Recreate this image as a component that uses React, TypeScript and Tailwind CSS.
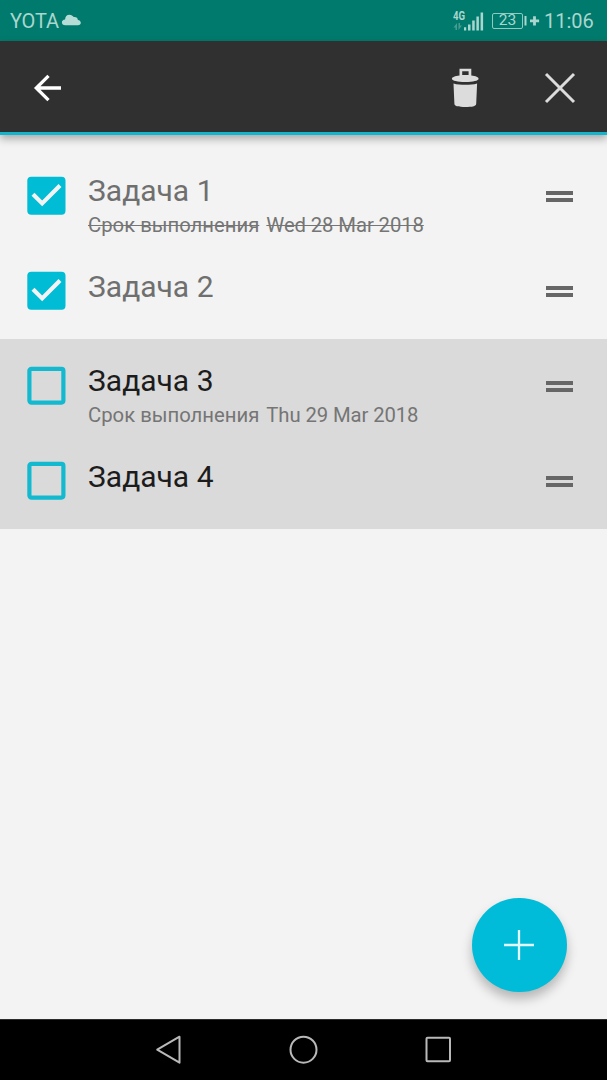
import { useState } from "react";

type Task = {
  id: number;
  title: string;
  due?: string;
  done: boolean;
  selected: boolean;
};

const initialTasks: Task[] = [
  { id: 1, title: "Задача 1", due: "Wed 28 Mar 2018", done: true, selected: false },
  { id: 2, title: "Задача 2", done: true, selected: false },
  { id: 3, title: "Задача 3", due: "Thu 29 Mar 2018", done: false, selected: true },
  { id: 4, title: "Задача 4", done: false, selected: true },
];

function StatusBar() {
  return (
    <div className="flex h-[41px] shrink-0 items-center bg-[#007a6c] pl-[10px] pr-[13px] text-[20px] leading-[41px] text-[#a9d6cf]">
      <span className="w-[51px] whitespace-nowrap pt-[2px] tracking-[-0.15px]">YOTA</span>
      <svg className="mt-[-1px] h-[12px] w-[20px]" viewBox="0 0 20 12" fill="#b5ddd6">
        <path d="M4.500 11.200C2 11.200.9 10 .9 8.400c0-1.600 1.200-2.800 3.200-2.900C4.200 2.700 5.800.7 8.400.7c2 0 3.500.9 4.300 2.400 2.600-.3 4 .9 4.200 2.800 1.900.2 2.900 1.500 2.900 2.900 0 1.500-1.100 2.400-2.900 2.400z" />
      </svg>
      <div className="ml-auto flex items-center">
        <div className="mr-[8px] flex h-[20px] w-[31px]">
          <div className="flex w-[11px] flex-col">
            <span className="h-[11px] origin-left scale-x-80 text-[12px] font-bold leading-[11px]">4G</span>
            <svg className="mt-px h-[7px] w-[10px]" viewBox="0 0 10 7" fill="#4a9c91">
              <path d="M4 0v7H2.500V4.500H.5zM5.500 0H7v2.500h2L5.500 7z" />
            </svg>
          </div>
          <svg className="h-[20px] w-[20px]" viewBox="0 0 20 20" fill="#a9d6cf">
            <path d="M0 16.200h2.200v3.300H0zM4 13.500h2.500v6H4zM8.200 9.500h2.500v10H8.200zM12.400 5.500h2.500v14h-2.500zM16.600 1.500h2.500v18h-2.500z" />
          </svg>
        </div>
        <div className="flex h-[16px] w-[31px] items-center justify-center rounded-[2px] border border-[#8fcac1] text-[15.500px] leading-[15px]">
          23
        </div>
        <svg className="ml-px mr-[4px] h-[12px] w-[16px]" viewBox="0 0 16 12" fill="#a9d6cf">
          <path d="M.5 1h2v9.500h-2zM9.100 1.300h2.800v3.200h3.200v2.700h-3.200v3.200H9.100V7.200H6V4.500h3.100z" />
        </svg>
        <span className="w-[50px] whitespace-nowrap pt-[2px]">11:06</span>
      </div>
    </div>
  );
}

function Toolbar() {
  return (
    <header className="z-10 flex h-[94px] shrink-0 items-center border-b-[3px] border-[#12b5cb] bg-[#303030] pl-[33px] pr-[31px] shadow-[0_4px_8px_rgba(0,0,0,0.3)]">
      <button aria-label="Back" className="mt-[2px]">
        <svg className="h-[28px] w-[29px]" viewBox="0 0 29 28" fill="none" stroke="#fff" strokeWidth="3.300">
          <path d="M28 14H3M15.500 1.800 3.300 14l12.200 12.200" />
        </svg>
      </button>
      <button aria-label="Delete" className="ml-auto mt-[3px]">
        <svg className="h-[40px] w-[28px]" viewBox="0 0 28 40" fill="#dcdcdc">
          <path d="M8.500 7.500V.8h11.800v6.700c4.500.4 7.300 1.700 7.300 3.200 0 2-5.500 3.200-13.200 3.200S.9 12.700.9 10.700c0-1.500 3.100-2.800 7.600-3.200zm2.700-.4h6.400V3.300h-6.400z" />
          <path d="M2.500 15.400c3.500 1 7.500 1.400 11.800 1.400s8.300-.4 11.800-1.400l-.9 20.400c-.1 1.400-1 2-2.400 2.400-2.500.6-5.400.8-8.500.8s-6-.2-8.500-.8c-1.400-.4-2.300-1-2.400-2.400z" />
        </svg>
      </button>
      <button aria-label="Close" className="ml-[65px] mt-[3px]">
        <svg className="h-[32px] w-[32px]" viewBox="0 0 32 32" fill="none" stroke="#dcdcdc" strokeWidth="3">
          <path d="m2 2 28 28M30 2 2 30" />
        </svg>
      </button>
    </header>
  );
}

function TaskRow({ task, onToggle }: { task: Task; onToggle: () => void }) {
  const strike = task.done ? "line-through decoration-1" : "";

  return (
    <li className={`flex h-[95px] items-start pl-[27px] pr-[34px] ${task.selected ? "bg-[#dadada]" : ""}`}>
      <button
        role="checkbox"
        aria-checked={task.done}
        aria-label={task.title}
        onClick={onToggle}
        className="mt-[27px] h-[39px] w-[39px]"
      >
        <svg className="h-[39px] w-[39px]" viewBox="0 0 39 39" fill="none">
          {task.done ? (
            <>
              <rect x="0.300" y="0.700" width="38.200" height="38" rx="4" fill="#00bcd4" />
              <path d="M6 18.200 15.200 27.400 33 9.600" stroke="#f3f3f3" strokeWidth="4.200" />
            </>
          ) : (
            <rect x="2.400" y="2.800" width="34" height="33.800" rx="2" stroke="#12b9cf" strokeWidth="4.200" />
          )}
        </svg>
      </button>
      <div className={`ml-[22px] flex flex-1 flex-col ${task.due ? "pt-[24px]" : "pt-[25px]"}`}>
        <span className={`h-[36px] text-[30px] leading-[36px] ${task.done ? "text-[#6f6f6f]" : "text-[#1c1c1c]"}`}>
          {task.title}
        </span>
        {task.due && (
          <div className="mt-[4px] flex gap-[7px] whitespace-nowrap text-[20.300px] leading-[24px] text-[#757575]">
            <span className={strike}>Срок выполнения</span>
            <span className={`tracking-[-0.1px] ${strike}`}>{task.due}</span>
          </div>
        )}
      </div>
      <div className="mt-[42px] flex w-[27px] flex-col gap-[3px]">
        <div className="h-[4px] bg-[#666666]" />
        <div className="h-[4px] bg-[#666666]" />
      </div>
    </li>
  );
}

function NavigationBar() {
  return (
    <nav className="flex h-[61px] shrink-0 items-center justify-between border-t border-[#2c2c2c] bg-black pl-[155px] pr-[155px]">
      <svg className="h-[30px] w-[27px]" viewBox="0 0 27 30" fill="none" stroke="#b9b9b9" strokeWidth="2" strokeLinejoin="round">
        <path d="M24.500 1.700v26L2.200 14.700z" />
      </svg>
      <svg className="h-[30px] w-[30px]" viewBox="0 0 30 30" fill="none" stroke="#b9b9b9" strokeWidth="2">
        <circle cx="15.500" cy="14.700" r="13" />
      </svg>
      <svg className="h-[28px] w-[28px]" viewBox="0 0 28 28" fill="none" stroke="#b9b9b9" strokeWidth="2">
        <rect x="2.500" y="1.700" width="23.500" height="23.500" rx="1" />
      </svg>
    </nav>
  );
}

export default function App() {
  const [tasks, setTasks] = useState(initialTasks);

  const toggle = (id: number) =>
    setTasks((list) => list.map((t) => (t.id === id ? { ...t, done: !t.done } : t)));

  return (
    <div className="flex h-[1080px] w-full flex-col overflow-hidden bg-[#f3f3f3] font-['Roboto',sans-serif]">
      <StatusBar />
      <Toolbar />
      <main className="relative flex-1 pt-[14px]">
        <ul>
          {tasks.map((task) => (
            <TaskRow key={task.id} task={task} onToggle={() => toggle(task.id)} />
          ))}
        </ul>
        <button
          aria-label="Add"
          className="absolute bottom-[27px] right-[40.500px] flex h-[94.500px] w-[94.500px] items-center justify-center rounded-full bg-[#00bcd8] shadow-[0_7px_11px_rgba(0,0,0,0.25)]"
        >
          <svg className="h-[30px] w-[30px]" viewBox="0 0 30 30" fill="none" stroke="#e3f8fb" strokeWidth="2.300">
            <path d="M15 0v30M0 15h30" />
          </svg>
        </button>
      </main>
      <NavigationBar />
    </div>
  );
}
